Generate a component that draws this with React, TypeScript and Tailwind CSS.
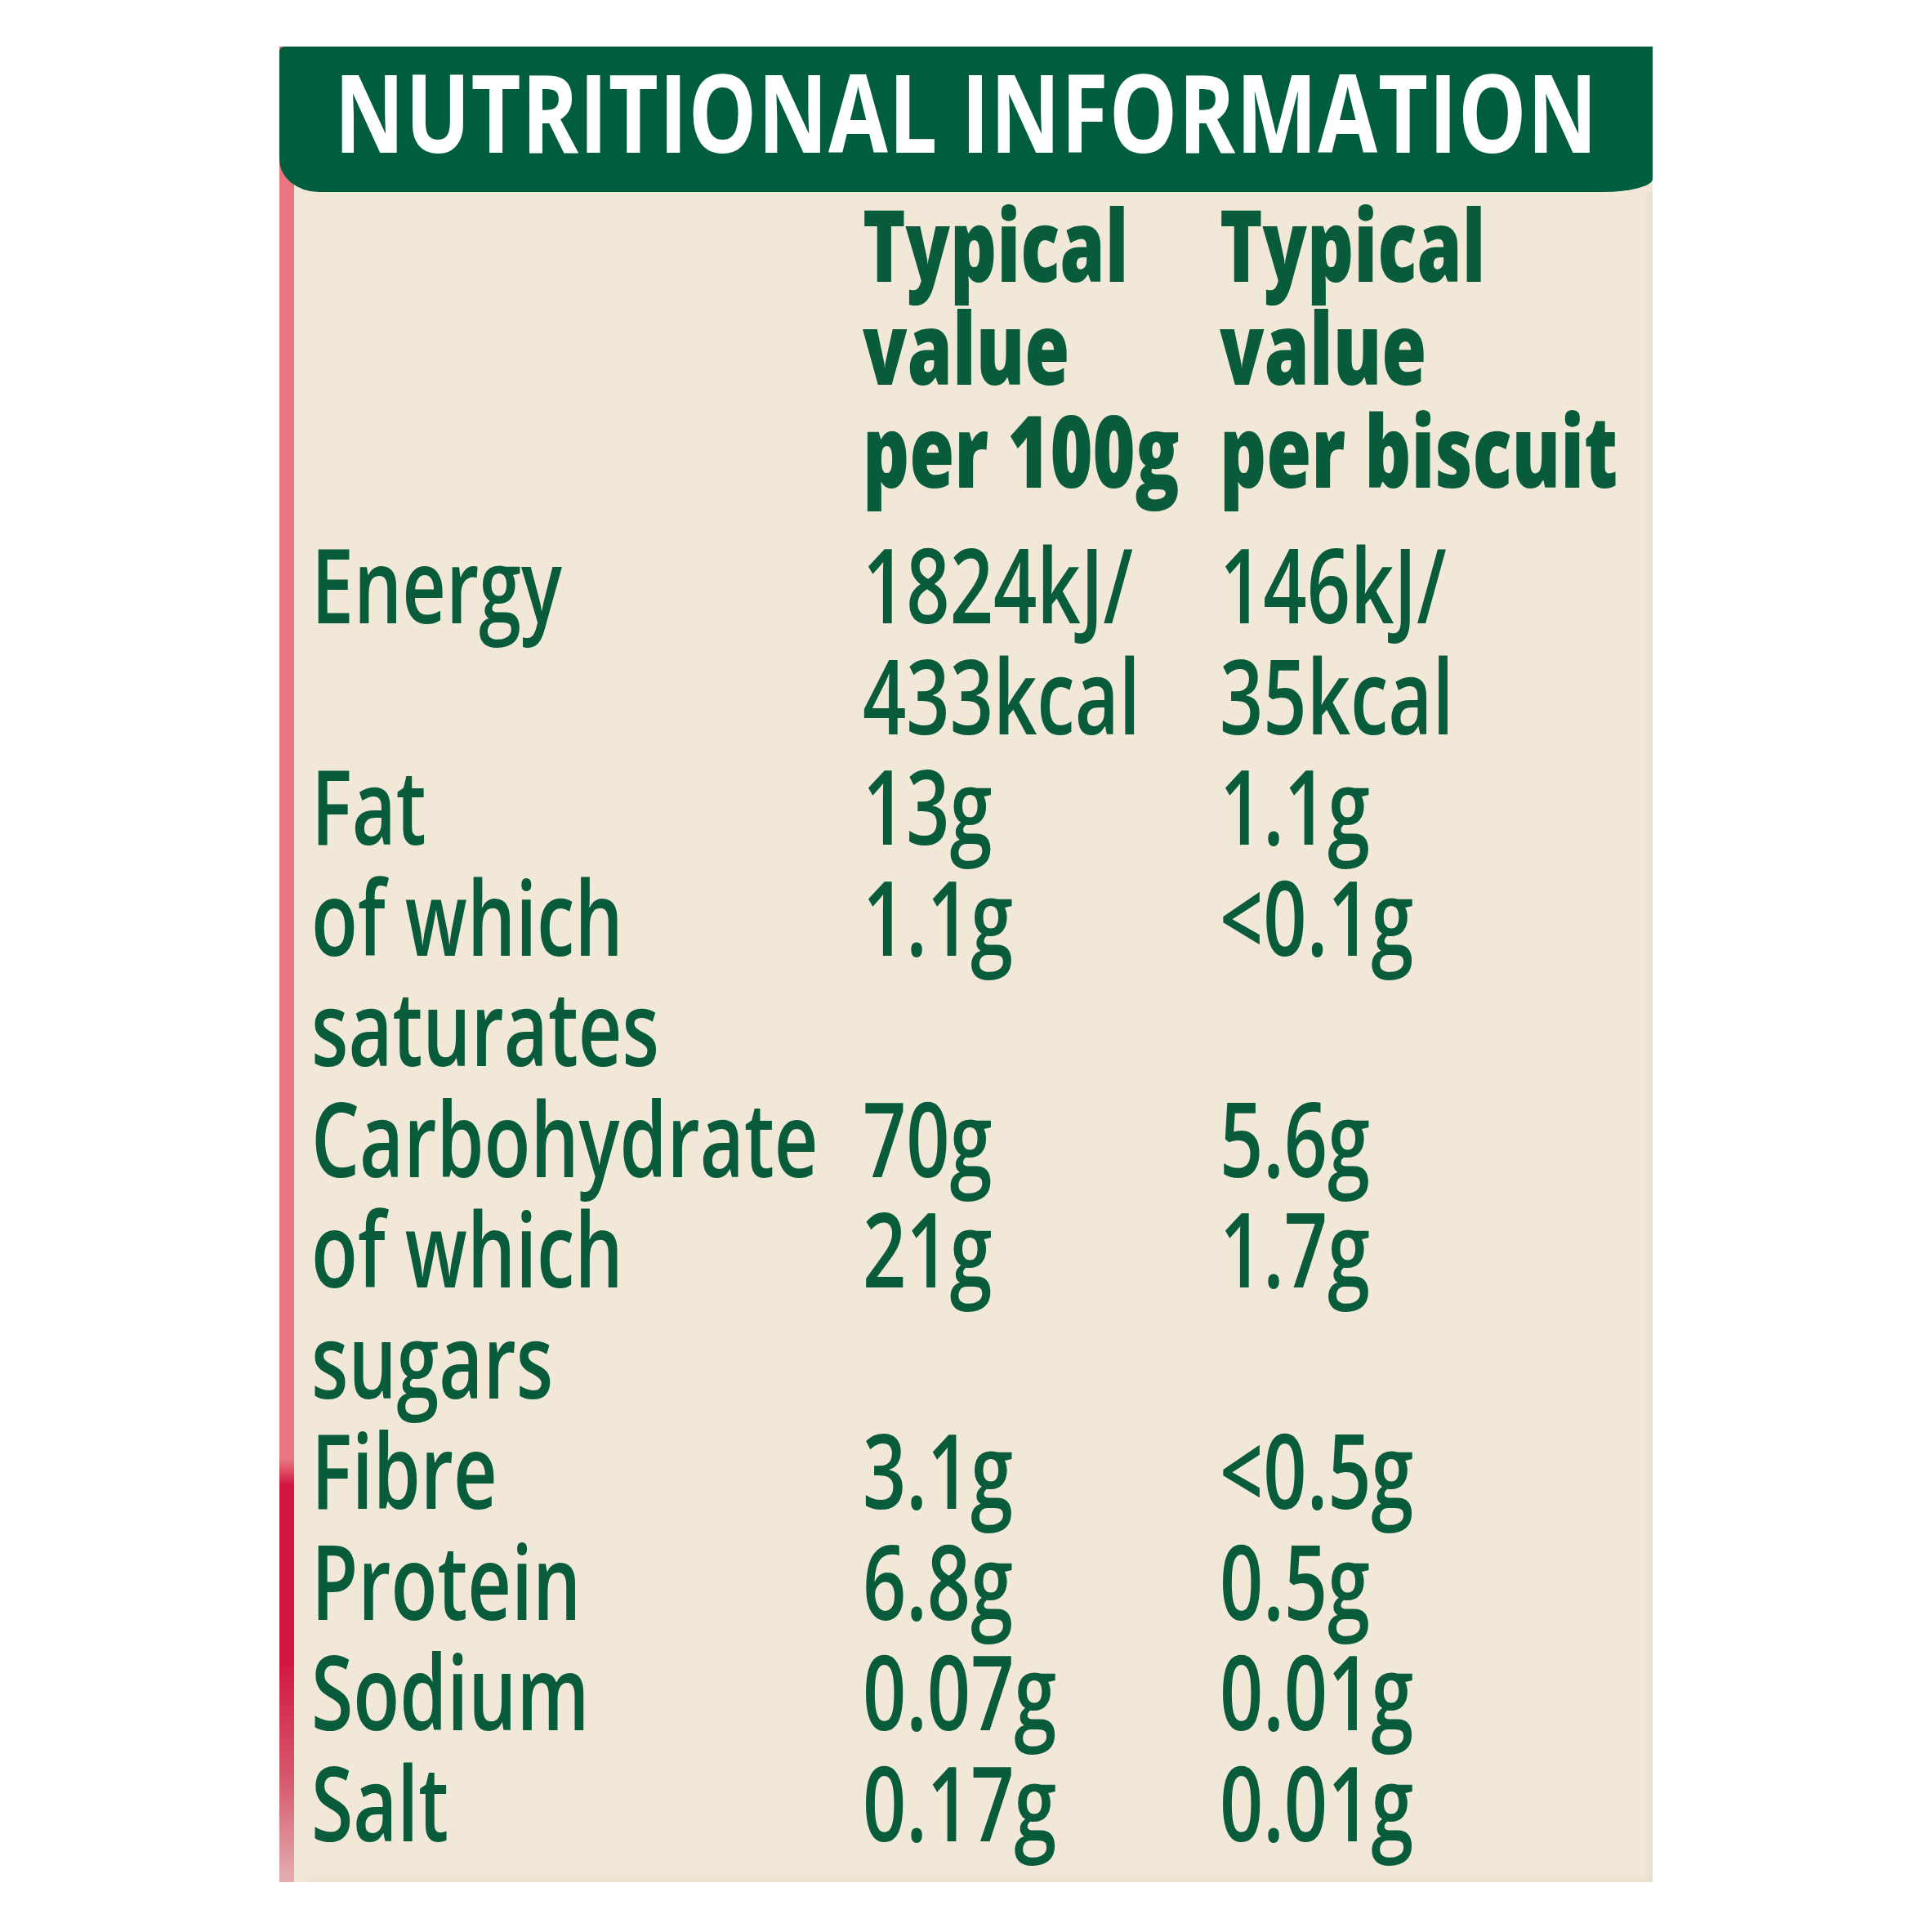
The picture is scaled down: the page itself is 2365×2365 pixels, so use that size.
const rows = [
  { label: ['Energy'], per100: ['1824kJ/', '433kcal'], perBiscuit: ['146kJ/', '35kcal'] },
  { label: ['Fat'], per100: ['13g'], perBiscuit: ['1.1g'] },
  { label: ['of which', 'saturates'], per100: ['1.1g'], perBiscuit: ['<0.1g'] },
  { label: ['Carbohydrate'], per100: ['70g'], perBiscuit: ['5.6g'] },
  { label: ['of which', 'sugars'], per100: ['21g'], perBiscuit: ['1.7g'] },
  { label: ['Fibre'], per100: ['3.1g'], perBiscuit: ['<0.5g'] },
  { label: ['Protein'], per100: ['6.8g'], perBiscuit: ['0.5g'] },
  { label: ['Sodium'], per100: ['0.07g'], perBiscuit: ['0.01g'] },
  { label: ['Salt'], per100: ['0.17g'], perBiscuit: ['0.01g'] },
];

// narrow the humanist face so it reads like the condensed label type
const Cell = ({ lines, narrow }: { lines: string[]; narrow?: boolean }) => (
  <div className={`min-w-0 origin-left whitespace-nowrap ${narrow ? 'scale-x-[0.73]' : 'scale-x-[0.74]'}`}>
    {lines.map((line) => (
      <div key={line}>{line}</div>
    ))}
  </div>
);

const App = () => {
  return (
    <div className="w-[2365px] h-[2365px] bg-white pt-[57px] pl-[342px] font-['Open_Sans',sans-serif] overflow-hidden">
      <div className="w-[1681px] h-[2247px] flex flex-col bg-[linear-gradient(to_right,#e8757f_18px,#f2e8d8_18px)]">
        {/* Title band */}
        <div className="h-[178px] shrink-0 bg-[#005e3f] rounded-tl-[6px] rounded-bl-[48px_40px] rounded-br-[60px_16px] flex justify-center pt-[13px]">
          <h1 className="text-[132px] leading-none font-bold text-white whitespace-nowrap scale-x-[0.8] tracking-[1px]">
            NUTRITIONAL INFORMATION
          </h1>
        </div>

        {/* Body */}
        <div className="flex flex-1 min-w-0">
          <div className="w-[18px] shrink-0 bg-[linear-gradient(to_bottom,#e8757f_0%,#e8757f_75%,#d3173f_76.5%,#d3173f_87%,#d65a6c_94%,#e4aeb2_100%)]" />
          <div className="flex-1 min-w-0 bg-[#f2e8d8] rounded-bl-[26px] pl-[21px] text-[#085c3c] shadow-[inset_-10px_-8px_10px_-6px_rgba(120,90,50,0.08)]">
            <div className="grid grid-cols-[675px_437px_minmax(0,1fr)] text-[122px] leading-[126px] font-extrabold mb-[34px]">
              <div />
              <Cell narrow lines={['Typical', 'value', 'per 100g']} />
              <Cell narrow lines={['Typical', 'value', 'per biscuit']} />
            </div>

            <div className="grid grid-cols-[675px_437px_minmax(0,1fr)] text-[126px] leading-[135.5px] font-semibold">
              {rows.map((row) => (
                <div key={row.label.join(' ') + row.per100[0]} className="contents">
                  <Cell lines={row.label} />
                  <Cell lines={row.per100} />
                  <Cell lines={row.perBiscuit} />
                </div>
              ))}
            </div>
          </div>
        </div>
      </div>
    </div>
  );
};

export default App;
